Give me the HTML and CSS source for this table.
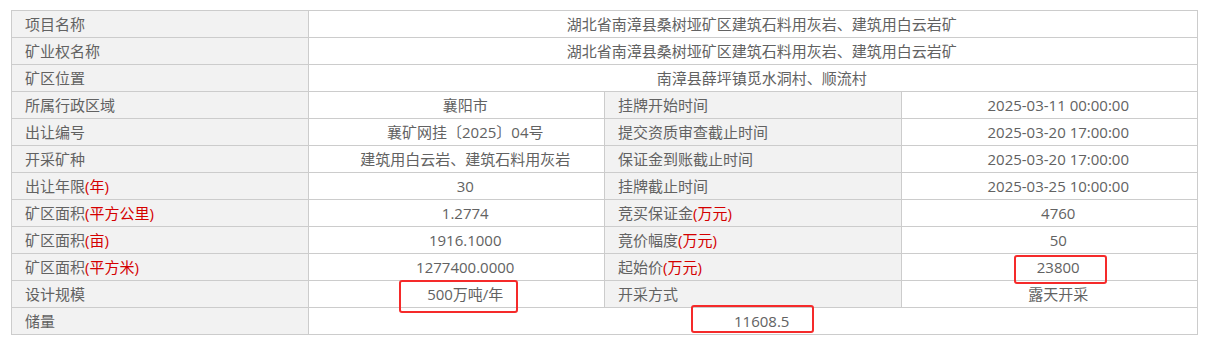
FILE: index.html
```html
<!DOCTYPE html>
<html lang="zh-CN">
<head>
<meta charset="utf-8">
<link rel="stylesheet" href="styles.css">
</head>
<body>
<div class="wrap">
<table class="info">
  <colgroup><col class="c"><col class="c"><col class="c"><col class="c"></colgroup>
  <tr><td class="lbl">项目名称</td><td class="val" colspan="3">湖北省南漳县桑树垭矿区建筑石料用灰岩、建筑用白云岩矿</td></tr>
  <tr><td class="lbl">矿业权名称</td><td class="val" colspan="3">湖北省南漳县桑树垭矿区建筑石料用灰岩、建筑用白云岩矿</td></tr>
  <tr><td class="lbl">矿区位置</td><td class="val" colspan="3">南漳县薛坪镇觅水洞村、顺流村</td></tr>
  <tr><td class="lbl">所属行政区域</td><td class="val">襄阳市</td><td class="lbl">挂牌开始时间</td><td class="val">2025-03-11 00:00:00</td></tr>
  <tr><td class="lbl">出让编号</td><td class="val">襄矿网挂〔2025〕04号</td><td class="lbl">提交资质审查截止时间</td><td class="val">2025-03-20 17:00:00</td></tr>
  <tr><td class="lbl">开采矿种</td><td class="val">建筑用白云岩、建筑石料用灰岩</td><td class="lbl">保证金到账截止时间</td><td class="val">2025-03-20 17:00:00</td></tr>
  <tr><td class="lbl">出让年限<span class="red">(年)</span></td><td class="val">30</td><td class="lbl">挂牌截止时间</td><td class="val">2025-03-25 10:00:00</td></tr>
  <tr><td class="lbl">矿区面积<span class="red">(平方公里)</span></td><td class="val">1.2774</td><td class="lbl">竞买保证金<span class="red">(万元)</span></td><td class="val">4760</td></tr>
  <tr><td class="lbl">矿区面积<span class="red">(亩)</span></td><td class="val">1916.1000</td><td class="lbl">竟价幅度<span class="red">(万元)</span></td><td class="val">50</td></tr>
  <tr><td class="lbl">矿区面积<span class="red">(平方米)</span></td><td class="val">1277400.0000</td><td class="lbl">起始价<span class="red">(万元)</span></td><td class="val">23800</td></tr>
  <tr><td class="lbl">设计规模</td><td class="val">500万吨/年</td><td class="lbl">开采方式</td><td class="val">露天开采</td></tr>
  <tr><td class="lbl">储量</td><td class="val" colspan="3">11608.5</td></tr>
</table>
<div class="mark mark-scale"></div>
<div class="mark mark-reserve"></div>
<div class="mark mark-price"></div>
</div>
</body>
</html>
```
FILE: styles.css
```css
html, body {
  margin: 0;
  padding: 0;
  background: #fff;
}
.wrap {
  position: relative;
  padding: 10px 0 0 11px;
}
.info {
  border-collapse: collapse;
  table-layout: fixed;
  width: 1187px;
  font-family: "Open Sans", "Noto Sans CJK SC", "Microsoft YaHei", sans-serif;
  font-size: 15px;
  color: #626262;
}
.info .c {
  width: 25%;
}
.info td {
  border: 1px solid #ccc;
  height: 26px;
  padding: 0;
  line-height: 26px;
  white-space: nowrap;
  overflow: hidden;
}
.info .lbl {
  background: #f2f2f2;
  padding-left: 13px;
  text-align: left;
}
.info .val {
  background: #fff;
  text-align: center;
  padding-left: 18px;
}
.red {
  color: #d40000;
}
.mark {
  position: absolute;
  border: 2px solid #f52a2a;
  border-radius: 3px;
  box-sizing: border-box;
}
.mark-scale {
  left: 399px;
  top: 280px;
  width: 119px;
  height: 33px;
}
.mark-reserve {
  left: 691px;
  top: 305px;
  width: 123px;
  height: 28px;
}
.mark-price {
  left: 1014px;
  top: 255px;
  width: 93px;
  height: 29px;
}
```
